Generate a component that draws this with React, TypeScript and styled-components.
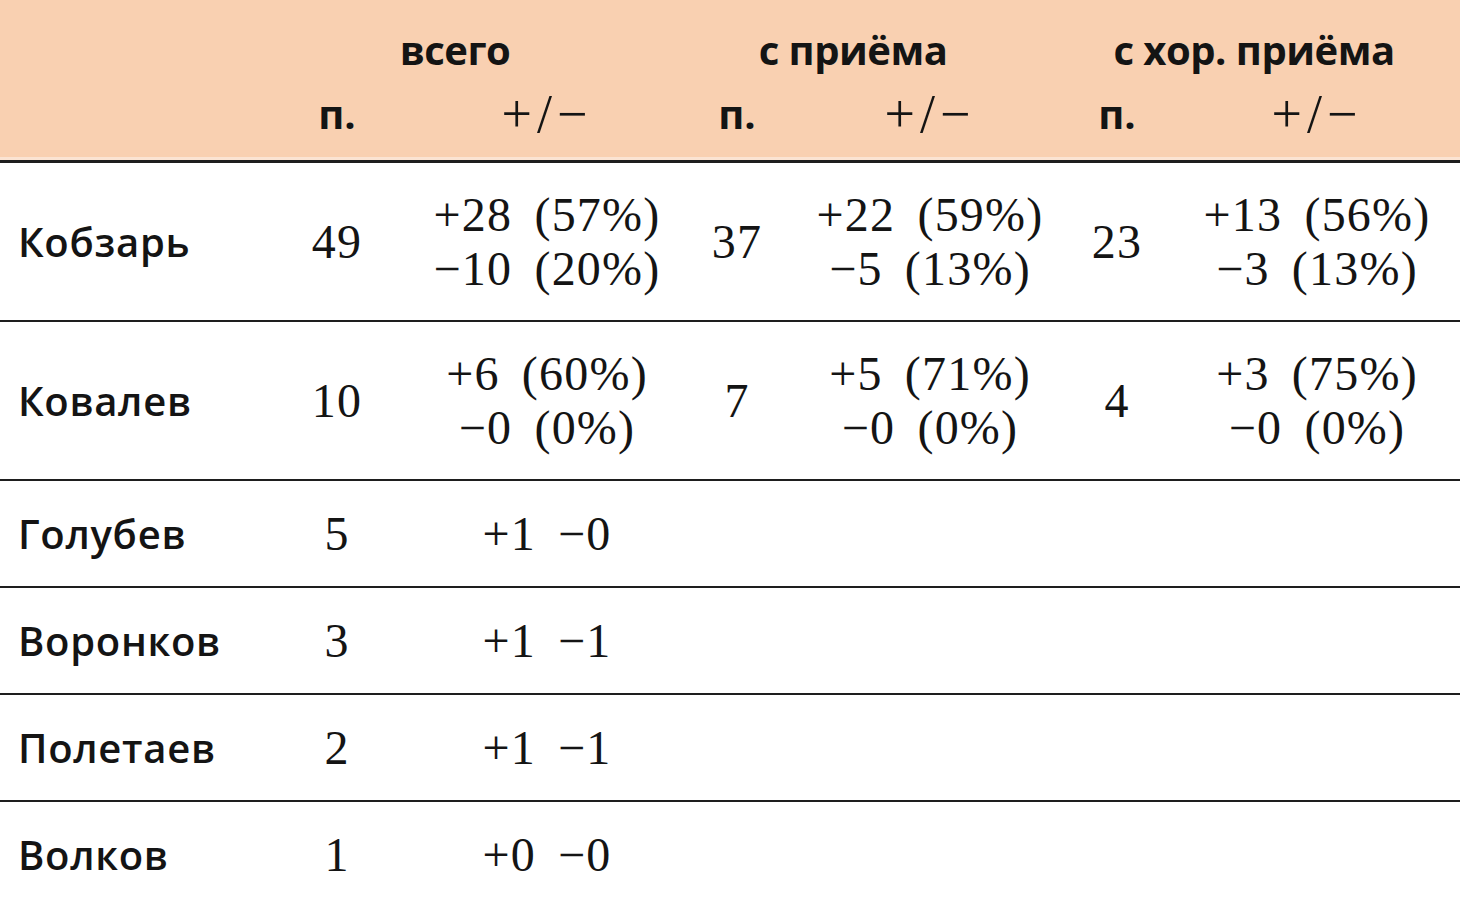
import React from 'react';
import styled, { createGlobalStyle } from 'styled-components';

const GlobalStyle = createGlobalStyle`
    html, body {
        margin: 0;
        padding: 0;
        background: #fff;
    }
    body {
        width: 1460px;
        overflow: hidden;
    }
`;

const COLS = '290px 94px 326px 54px 332px 42px 1fr';

const Table = styled.div`
    width: 1460px;
    color: #141414;
`;

const Head = styled.div`
    background-color: #f9d0b1;
    padding: 18px 0 16px;
    border-bottom: 3px solid #1e1e1e;
    box-shadow: inset 0 -3px 0 #fbe3d2;
`;

const GroupLine = styled.div`
    display: grid;
    grid-template-columns: 290px 330px 466px 336px 1fr;
    height: 63px;
`;

const SubLine = styled.div`
    display: grid;
    grid-template-columns: ${COLS};
    height: 63px;
`;

const Cell = styled.div<{ $shift?: number }>`
    display: flex;
    align-items: center;
    justify-content: center;
    white-space: nowrap;
    padding-left: ${(p) => p.$shift ?? 0}px;
`;

const GroupTitle = styled(Cell)`
    font-family: 'Open Sans', 'DejaVu Sans', sans-serif;
    font-weight: 700;
    font-size: 40px;
    letter-spacing: -0.5px;
`;

const HeadLabel = styled(Cell)`
    font-family: 'Open Sans', 'DejaVu Sans', sans-serif;
    font-weight: 700;
    font-size: 40px;
`;

const HeadSign = styled(Cell)`
    font-family: 'Liberation Serif', 'DejaVu Serif', serif;
    font-size: 54px;
    letter-spacing: 5px;
    padding-top: 2px;
`;

const Row = styled.div<{ $tall?: boolean; $last?: boolean }>`
    display: grid;
    grid-template-columns: ${COLS};
    height: ${(p) => (p.$tall ? 157 : 105)}px;
    border-bottom: ${(p) => (p.$last ? 'none' : '2px solid #1e1e1e')};
`;

const Name = styled.div`
    display: flex;
    align-items: center;
    padding-left: 18px;
    font-family: 'Open Sans', 'DejaVu Sans', sans-serif;
    font-weight: 600;
    font-size: 40px;
    letter-spacing: 0.7px;
    white-space: nowrap;
`;

const Num = styled(Cell)`
    font-family: 'Liberation Serif', 'DejaVu Serif', serif;
    font-size: 48px;
    letter-spacing: 1.2px;
    word-spacing: 9px;
`;

const Stack = styled(Cell)`
    flex-direction: column;
    font-family: 'Liberation Serif', 'DejaVu Serif', serif;
    font-size: 48px;
    line-height: 54px;
    letter-spacing: 1.2px;
    word-spacing: 9px;
`;

type Split = { n: number; plus: string; minus: string };

type Player = {
    name: string;
    total: Split;
    rec?: Split;
    good?: Split;
};

const players: Player[] = [
    {
        name: 'Кобзарь',
        total: { n: 49, plus: '+28 (57%)', minus: '−10 (20%)' },
        rec: { n: 37, plus: '+22 (59%)', minus: '−5 (13%)' },
        good: { n: 23, plus: '+13 (56%)', minus: '−3 (13%)' },
    },
    {
        name: 'Ковалев',
        total: { n: 10, plus: '+6 (60%)', minus: '−0 (0%)' },
        rec: { n: 7, plus: '+5 (71%)', minus: '−0 (0%)' },
        good: { n: 4, plus: '+3 (75%)', minus: '−0 (0%)' },
    },
    { name: 'Голубев', total: { n: 5, plus: '+1', minus: '−0' } },
    { name: 'Воронков', total: { n: 3, plus: '+1', minus: '−1' } },
    { name: 'Полетаев', total: { n: 2, plus: '+1', minus: '−1' } },
    { name: 'Волков', total: { n: 1, plus: '+0', minus: '−0' } },
];

const SplitCells: React.FC<{ s: Split; shift?: number }> = ({ s, shift }) => (
    <>
        <Num>{s.n}</Num>
        <Stack $shift={shift}>
            <span>{s.plus}</span>
            <span>{s.minus}</span>
        </Stack>
    </>
);

export default function App() {
    return (
        <>
            <GlobalStyle />
            <Table>
                <Head>
                    <GroupLine>
                        <div />
                        <GroupTitle>всего</GroupTitle>
                        <GroupTitle>с приёма</GroupTitle>
                        <GroupTitle>с хор. приёма</GroupTitle>
                    </GroupLine>
                    <SubLine>
                        <div />
                        <HeadLabel>п.</HeadLabel>
                        <HeadSign>+/−</HeadSign>
                        <HeadLabel>п.</HeadLabel>
                        <HeadSign>+/−</HeadSign>
                        <HeadLabel>п.</HeadLabel>
                        <HeadSign $shift={36}>+/−</HeadSign>
                    </SubLine>
                </Head>
                {players.map((p, i) => (
                    <Row key={p.name} $tall={!!p.rec} $last={i === players.length - 1}>
                        <Name>{p.name}</Name>
                        {p.rec && p.good ? (
                            <>
                                <SplitCells s={p.total} />
                                <SplitCells s={p.rec} />
                                <SplitCells s={p.good} shift={36} />
                            </>
                        ) : (
                            <>
                                <Num>{p.total.n}</Num>
                                <Num>
                                    {p.total.plus} {p.total.minus}
                                </Num>
                            </>
                        )}
                    </Row>
                ))}
            </Table>
        </>
    );
}
